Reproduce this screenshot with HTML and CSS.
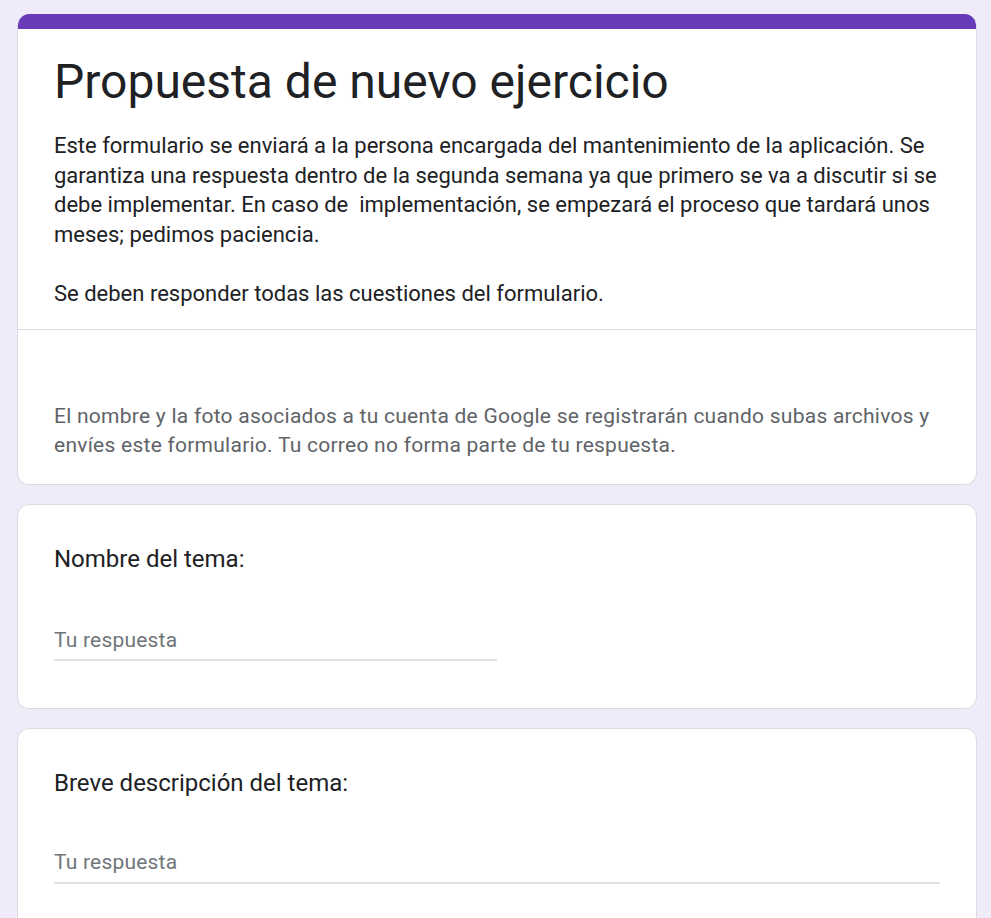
FILE: index.html
```html
<!DOCTYPE html>
<html lang="es">
<head>
<meta charset="utf-8">
<title>Propuesta de nuevo ejercicio</title>
<link rel="stylesheet" href="styles.css">
</head>
<body>
<main class="form">
  <section class="card header-card">
    <div class="accent"></div>
    <div class="header-main">
      <h1 class="title">Propuesta de nuevo ejercicio</h1>
      <div class="desc">Este formulario se enviará a la persona encargada del mantenimiento de la aplicación. Se garantiza una respuesta dentro de la segunda semana ya que primero se va a discutir si se debe implementar. En caso de&nbsp; implementación, se empezará el proceso que tardará unos meses; pedimos paciencia.<br><br>Se deben responder todas las cuestiones del formulario.</div>
    </div>
    <div class="account">
      <p class="notice">El nombre y la foto asociados a tu cuenta de Google se registrarán cuando subas archivos y envíes este formulario. Tu correo no forma parte de tu respuesta.</p>
    </div>
  </section>

  <section class="card question">
    <div class="q-title">Nombre del tema:</div>
    <div class="answer short"><span class="placeholder">Tu respuesta</span></div>
  </section>

  <section class="card question">
    <div class="q-title">Breve descripción del tema:</div>
    <div class="answer long"><span class="placeholder">Tu respuesta</span></div>
  </section>
</main>
</body>
</html>
```

FILE: styles.css
```css
* { box-sizing: border-box; }

html, body {
  margin: 0;
  padding: 0;
  background: #f0ebf8;
}

body {
  font-family: Roboto, "Liberation Sans", Arial, sans-serif;
  color: #202124;
}

.form {
  width: 960px;
  margin: 14px 0 0 17px;
  display: flex;
  flex-direction: column;
  gap: 19px;
}

.card {
  background: #fff;
  border: 1px solid #dadce0;
  border-radius: 12px;
}

.header-card {
  border-top: none;
  overflow: hidden;
}

.accent {
  height: 15px;
  background: #673ab7;
  margin: 0 -1px;
}

.header-main {
  padding: 23px 36px 21px 36px;
  border-bottom: 1px solid #dadce0;
}

.title {
  margin: 0;
  font-weight: 400;
  font-size: 48px;
  line-height: 60px;
  color: #202124;
}

.desc {
  margin-top: 19px;
  font-size: 22px;
  line-height: 29.5px;
  color: #202124;
}

.account {
  padding: 72px 36px 25px 36px;
}

.notice {
  margin: 0;
  font-size: 21px;
  line-height: 28.5px;
  letter-spacing: 0.25px;
  color: #5f6368;
}

.question {
  padding: 36px 36px 47px 36px;
}

.q-title {
  font-size: 24px;
  line-height: 36px;
  color: #202124;
}

.answer {
  margin-top: 48px;
  padding-bottom: 4px;
  border-bottom: 2px solid #e0e0e0;
  font-size: 21px;
  line-height: 30px;
}

.answer.short { width: 50%; }

.answer.long {
  margin-top: 46px;
  padding-bottom: 5px;
}

.placeholder {
  color: #70757a;
  letter-spacing: 0.2px;
}
```
